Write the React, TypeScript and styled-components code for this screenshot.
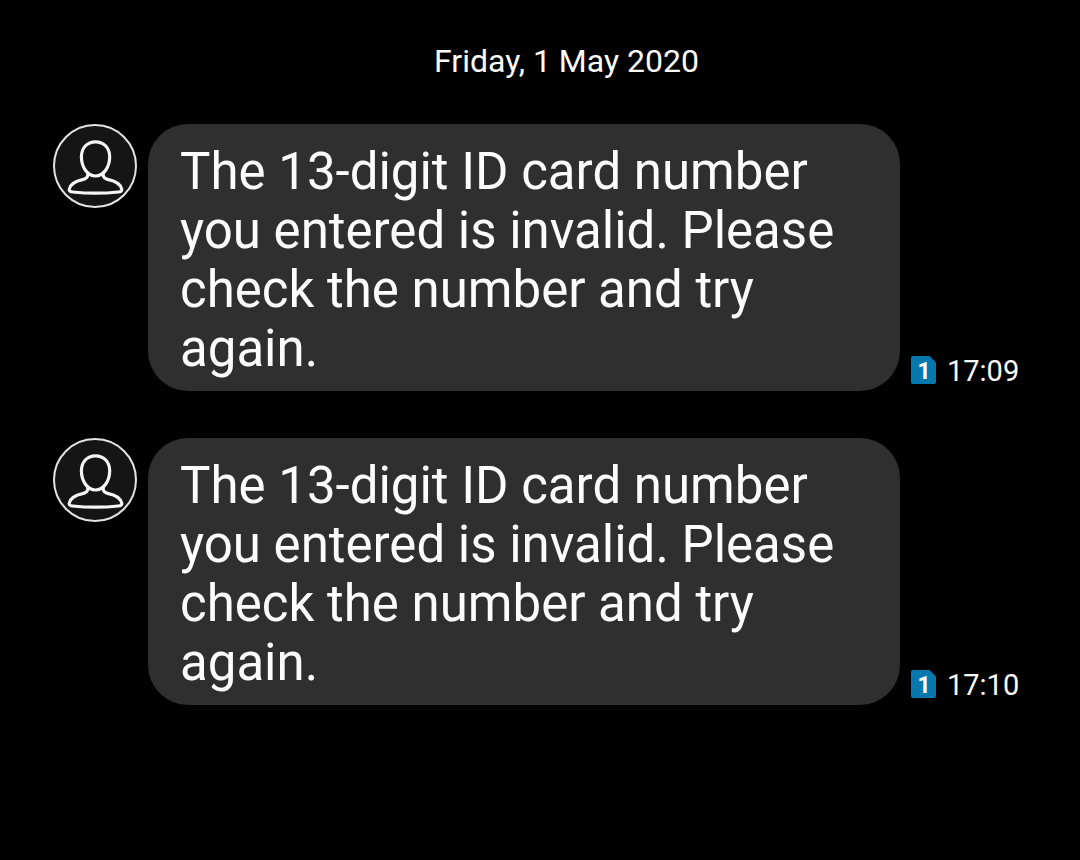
import React from 'react';
import styled, { createGlobalStyle } from 'styled-components';

const GlobalStyle = createGlobalStyle`
  *, *::before, *::after { box-sizing: border-box; }
  body {
    margin: 0;
    background: #000;
    color: #fcfcfc;
    font-family: Roboto, sans-serif;
  }
`;

const Conversation = styled.main`
  min-height: 100vh;
  padding: 42px 0 48px 53px;
  background: #000;
`;

const DateHeading = styled.h1`
  margin: 0 0 44px;
  font-size: 32px;
  font-weight: 400;
  line-height: 38px;
  text-align: center;
`;

const MessageList = styled.ol`
  display: flex;
  flex-direction: column;
  gap: 47px;
  margin: 0;
  padding: 0 53px 0 0;
  list-style: none;
`;

const Message = styled.li`
  display: flex;
  align-items: flex-start;
`;

const Avatar = styled.svg`
  flex: none;
  width: 84px;
  height: 84px;
  margin-right: 11px;
`;

const Bubble = styled.p`
  flex: 0 1 752px;
  min-width: 0;
  margin: 0;
  padding: 18px 32px 13px;
  border-radius: 40px;
  background: #2f2f2f;
  font-size: 51px;
  line-height: 59px;
`;

const Meta = styled.div`
  display: flex;
  flex: none;
  align-self: flex-end;
  align-items: center;
  gap: 11px;
  margin: 0 0 3px 11px;
`;

const SimIcon = styled.svg`
  width: 25px;
  height: 30px;
`;

const SimNumber = styled.text`
  fill: #fff;
  font-family: Roboto, sans-serif;
  font-size: 23px;
  font-weight: 700;
  text-anchor: middle;
`;

const Time = styled.time`
  font-size: 29px;
  line-height: 34px;
`;

const messages = [
  { time: '17:09', text: 'The 13-digit ID card number you entered is invalid. Please check the number and try again.' },
  { time: '17:10', text: 'The 13-digit ID card number you entered is invalid. Please check the number and try again.' },
];

export default function App() {
  return (
    <>
      <GlobalStyle />
      <Conversation>
        <DateHeading>Friday, 1 May 2020</DateHeading>
        <MessageList>
          {messages.map((message) => (
            <Message key={message.time}>
              <Avatar viewBox="0 0 84 84" role="img" aria-label="Contact">
                <circle cx="42" cy="42" r="41" fill="#151515" stroke="#e4e4e4" strokeWidth="2" />
                <g fill="none" stroke="#f6f6f6" strokeWidth="3.2" strokeLinejoin="round">
                  <path d="M42.5 17.8C34 17.8 28.4 24 28.4 32.8C28.4 43 34.4 52 42.5 52C50.6 52 56.7 43 56.7 32.8C56.7 24 51 17.8 42.5 17.8Z" />
                  <path d="M34.8 49V51C34.8 53.6 33.2 54.7 29.5 55.6C22 57.2 17.5 60 16.3 65C15.8 67.2 17.4 67.7 19.8 68C32 69.3 53 69.3 65.2 68C67.6 67.7 69.2 67.2 68.7 65C67.5 60 63 57.2 55.5 55.6C51.8 54.7 50.2 53.6 50.2 51V49" />
                </g>
              </Avatar>
              <Bubble>{message.text}</Bubble>
              <Meta>
                <SimIcon viewBox="0 0 25 30" role="img" aria-label="SIM 1">
                  <path d="M2 0H18.5L25 6.5V26Q25 28 23 28H2Q0 28 0 26V2Q0 0 2 0Z" fill="#0579ae" />
                  <SimNumber x="13" y="23">1</SimNumber>
                </SimIcon>
                <Time dateTime={`2020-05-01T${message.time}`}>{message.time}</Time>
              </Meta>
            </Message>
          ))}
        </MessageList>
      </Conversation>
    </>
  );
}
